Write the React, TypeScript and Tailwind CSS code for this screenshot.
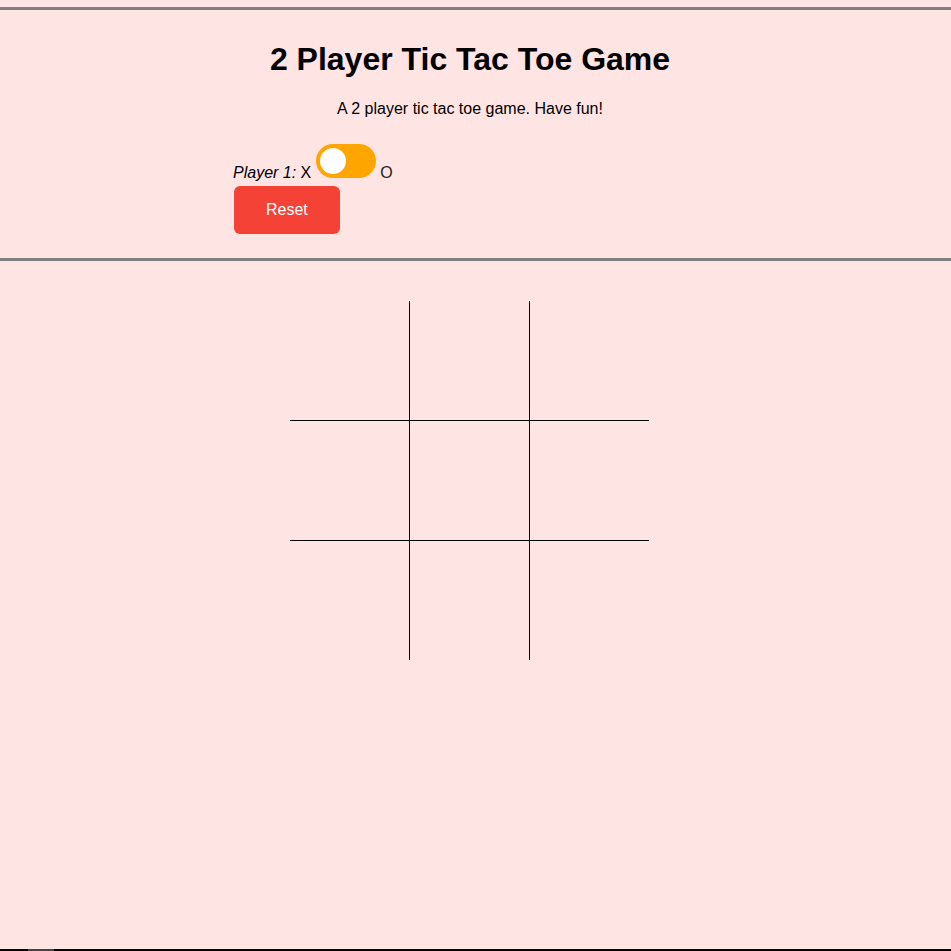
import { useState } from 'react';

export default function App() {
  const [cells, setCells] = useState<string[]>(Array(9).fill(''));
  const [startO, setStartO] = useState(false);
  const [turn, setTurn] = useState(0);

  const borders = [
    'border-r border-b',
    'border-r border-b',
    'border-b',
    'border-r border-b',
    'border-r border-b',
    'border-b',
    'border-r',
    'border-r',
    '',
  ];

  const play = (i: number) => {
    if (cells[i]) return;
    const first = startO ? 'O' : 'X';
    const second = startO ? 'X' : 'O';
    const next = [...cells];
    next[i] = turn % 2 === 0 ? first : second;
    setCells(next);
    setTurn(turn + 1);
  };

  const reset = () => {
    setCells(Array(9).fill(''));
    setTurn(0);
  };

  return (
    <div className="h-[951px] overflow-hidden bg-[#ffe4e4] flex flex-col font-['Liberation_Sans',Arial,sans-serif] text-black">
      <div className="h-[7px]" />
      <header className="border-y-[3px] border-[#808080]">
        <div className="w-[940px] pt-[31px] pb-[24px]">
          <h1 className="text-[32px] leading-[37px] font-bold text-center">2 Player Tic Tac Toe Game</h1>
          <p className="mt-[22px] text-[16px] leading-[18px] text-center">A 2 player tic tac toe game. Have fun!</p>
          <div className="ml-[233px] mt-[26px] text-[16px] leading-[18px]">
            <i>Player 1:</i> X{' '}
            <span
              onClick={() => setStartO(!startO)}
              className="inline-block relative w-[60px] h-[34px] rounded-full bg-[#ffa500] cursor-pointer align-baseline"
            >
              <span
                className={`absolute top-[4px] w-[26px] h-[26px] rounded-full bg-white transition-all ${
                  startO ? 'left-[30px]' : 'left-[4px]'
                }`}
              />
            </span>{' '}
            <span className="text-[#222]">O</span>
          </div>
          <div className="ml-[234px] mt-[4px]">
            <button
              onClick={reset}
              className="bg-[#f44336] text-white text-[16px] leading-[18px] px-[32px] py-[15px] rounded-[6px] cursor-pointer"
            >
              Reset
            </button>
          </div>
        </div>
      </header>
      <div className="ml-[290px] mt-[40px] flex">
        <div className="grid grid-cols-[120px_120px_119px] grid-rows-[120px_120px_119px]">
          {cells.map((c, i) => (
            <div
              key={i}
              onClick={() => play(i)}
              className={`${borders[i]} border-black flex items-center justify-center text-[64px] cursor-pointer`}
            >
              {c}
            </div>
          ))}
        </div>
      </div>
      <div className="flex-1" />
      <div className="h-[2px] bg-black flex">
        <div className="ml-[28px] w-[26px] h-full bg-[#444]" />
      </div>
    </div>
  );
}
